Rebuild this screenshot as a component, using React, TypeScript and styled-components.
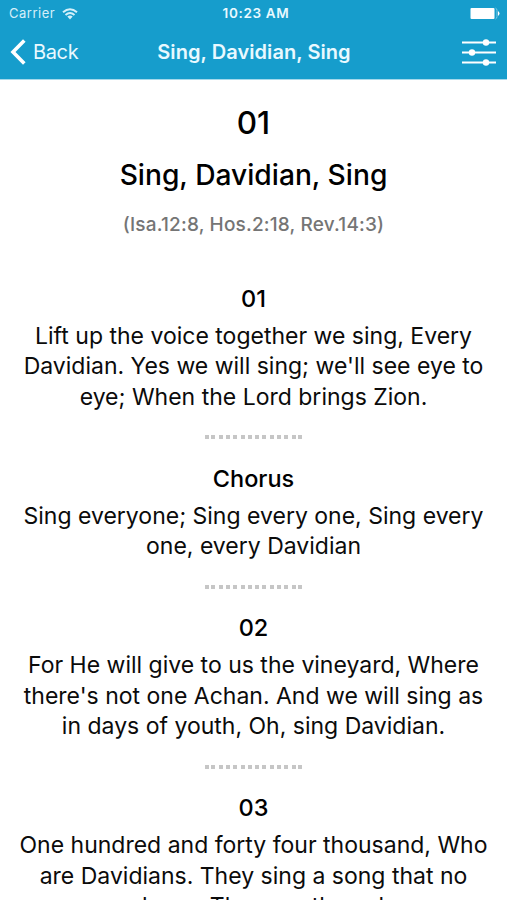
import React from 'react';
import styled, { createGlobalStyle } from 'styled-components';

const Global = createGlobalStyle`
  * { box-sizing: border-box; }
  html, body { margin: 0; background: #fff; }
  body { font-family: Inter, "Liberation Sans", sans-serif; color: #0b0b0b; overflow: hidden; }
`;
const Screen = styled.div`
  width: 507px;
  height: 900px;
  overflow: hidden;
  background: #fff;
`;
const Header = styled.header`
  height: 80px;
  background: #169dcc;
  border-bottom: 1px solid #a5d9eb;
  color: #e9f9ff;
`;
const StatusBar = styled.div`
  display: grid;
  grid-template-columns: 1fr auto 1fr;
  align-items: center;
  height: 27px;
  padding: 0 7px 0 9px;
  font-size: 13px;
  line-height: 27px;
`;
const Carrier = styled.span`
  display: flex;
  align-items: center;
  gap: 7px;
  letter-spacing: 0.5px;
  opacity: 0.9;
`;
const Clock = styled.span`
  font-size: 13.5px;
  font-weight: 600;
  letter-spacing: 0.65px;
  padding: 0 0 0 3px;
`;
const Battery = styled.svg`
  justify-self: end;
`;
const NavBar = styled.nav`
  display: grid;
  grid-template-columns: 1fr auto 1fr;
  align-items: center;
  height: 50px;
  padding: 0 11px 0 10px;
`;
const Back = styled.button`
  display: flex;
  align-items: center;
  gap: 7px;
  padding: 0;
  border: 0;
  background: none;
  color: inherit;
  font: 400 20px/26px Inter, sans-serif;
  letter-spacing: -0.35px;
`;
const NavTitle = styled.span`
  padding-left: 2px;
  font-size: 20px;
  font-weight: 600;
  line-height: 26px;
  letter-spacing: 0.07px;
`;
const Sliders = styled.svg`
  justify-self: end;
`;
const Song = styled.main`
  text-align: center;
  white-space: nowrap;
  padding-top: 23px;
`;
const Heading = styled.h1<{ $size: number }>`
  margin: 0 0 14px;
  font-size: ${p => p.$size}px;
  font-weight: 500;
  line-height: 39px;
  color: #000;
`;
const Reference = styled.p`
  margin: 0 0 44.5px;
  padding-top: 3px;
  font-size: 19px;
  font-weight: 500;
  line-height: 26px;
  letter-spacing: 0.18px;
  color: #757575;
`;
const Verse = styled.section`
  display: flex;
  flex-direction: column;
  align-items: center;
`;
const Label = styled.h2`
  margin: 0 0 7px;
  font-size: 23.5px;
  font-weight: 500;
  line-height: 31px;
  color: #000;
`;
const Line = styled.span`
  font-size: 23px;
  line-height: 30.5px;
`;
const Dots = styled.div`
  display: flex;
  justify-content: center;
  gap: 3.3px;
  height: 4px;
  margin: 23px 0 23.5px;
`;
const Dot = styled.i`
  width: 4px;
  height: 4px;
  background: #c6c6c6;
  &:first-child { margin-right: -1.2px; }
  &:last-child { margin-left: -1.2px; }
`;

type Entry = { label: string; lines: string[] };
const verses: Entry[] = [
  { label: '01', lines: ['Lift up the voice together we sing, Every', "Davidian. Yes we will sing; we'll see eye to", 'eye; When the Lord brings Zion.'] },
  { label: 'Chorus', lines: ['Sing everyone; Sing every one, Sing every', 'one, every Davidian'] },
  { label: '02', lines: ['For He will give to us the vineyard, Where', "there's not one Achan. And we will sing as", 'in days of youth, Oh, sing Davidian.'] },
  { label: '03', lines: ['One hundred and forty four thousand, Who', 'are Davidians. They sing a song that no', 'one learn. They are those he,'] },
];

export default function App() {
  return (
    <Screen>
      <Global />
      <Header>
        <StatusBar>
          <Carrier>
            Carrier
            <svg width="16" height="12" viewBox="0 0 16 12" fill="none" stroke="currentColor" strokeWidth="2">
              <path d="M1 4.3Q8-1.9 15 4.3M3.5 7Q8 3.1 12.5 7" />
              <path d="M5.3 8.6Q8 6.4 10.7 8.6L8 11.5Z" fill="currentColor" stroke="none" />
            </svg>
          </Carrier>
          <Clock>10:23 AM</Clock>
          <Battery width="30" height="13" viewBox="0 0 30 13">
            <path d="M25.5 1Q27 1.5 27 3.5V9.5Q27 11.5 25.5 12" fill="none" stroke="#7cc9e4" />
            <rect x="0.5" y="1" width="24" height="11" rx="1" fill="#fff" />
            <path d="M28 4Q31 6.5 28 9Z" fill="#fff" />
          </Battery>
        </StatusBar>
        <NavBar>
          <Back>
            <svg width="16" height="26" viewBox="0 0 16 26" fill="none" stroke="#fff" strokeWidth="3.6">
              <path d="M14.3 1.5L3 13L14.3 24.5" />
            </svg>
            Back
          </Back>
          <NavTitle>Sing, Davidian, Sing</NavTitle>
          <Sliders width="34" height="28" viewBox="0 0 34 28" fill="#fff">
            <path d="M0 3.4H34V5.6H0ZM0 13.4H34V15.6H0ZM0 23.4H34V25.6H0Z" />
            <circle cx="24" cy="4.5" r="3.2" />
            <circle cx="10" cy="14.5" r="3.2" />
            <circle cx="24" cy="24.5" r="3.2" />
          </Sliders>
        </NavBar>
      </Header>
      <Song>
        <Heading $size={31.5}>01</Heading>
        <Heading $size={28.2}>Sing, Davidian, Sing</Heading>
        <Reference>(Isa.12:8, Hos.2:18, Rev.14:3)</Reference>
        {verses.map((v, i) => (
          <Verse key={v.label}>
            <Label>{v.label}</Label>
            {v.lines.map(text => <Line key={text}>{text}</Line>)}
            {i < verses.length - 1 && (
              <Dots>{Array.from({ length: 14 }, (_, n) => <Dot key={n} />)}</Dots>
            )}
          </Verse>
        ))}
      </Song>
    </Screen>
  );
}
